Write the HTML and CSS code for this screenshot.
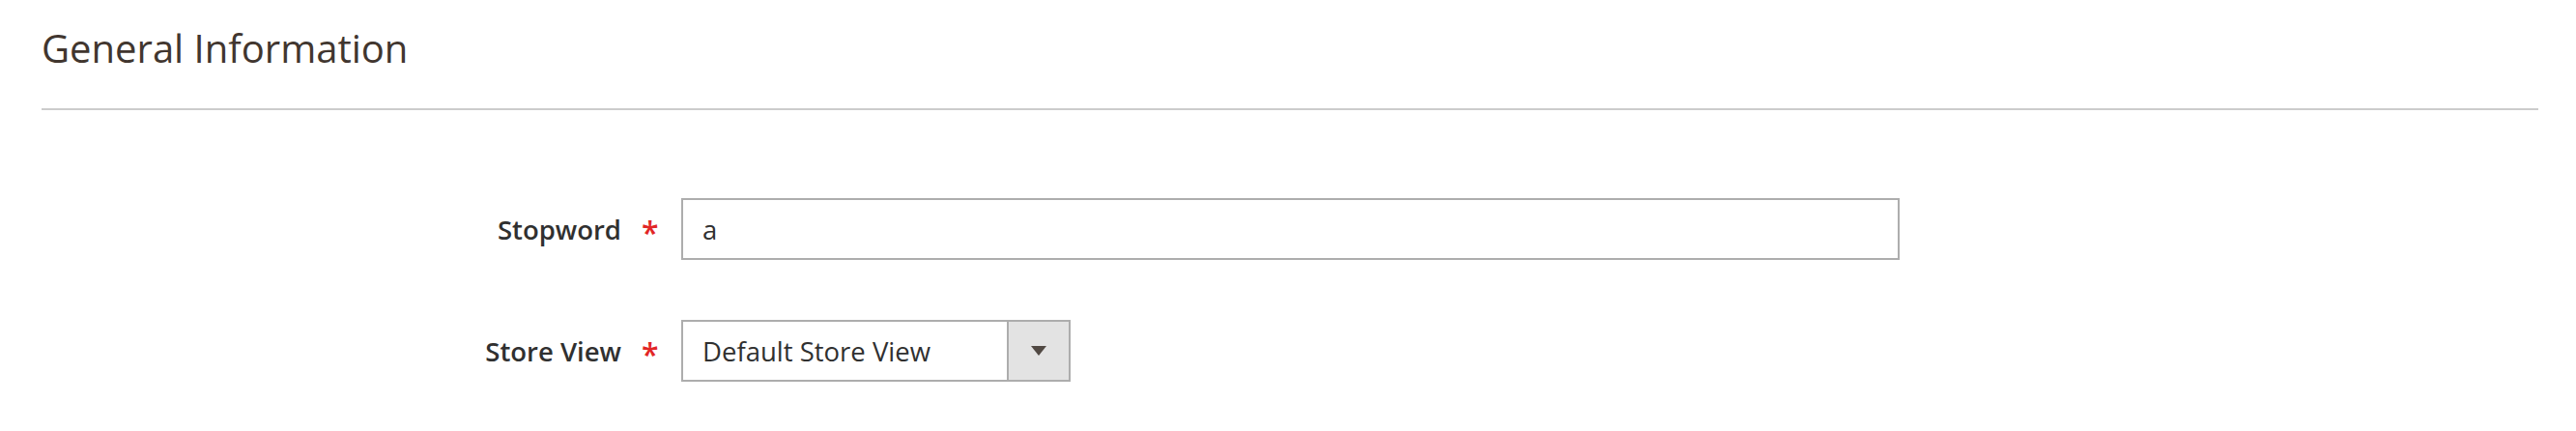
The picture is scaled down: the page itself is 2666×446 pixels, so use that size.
FILE: index.html
```html
<!doctype html>
<html>
<head>
  <link rel="stylesheet" href="styles.css">
</head>
<body>
  <div class="page">
    <div class="fieldset-title">
      <span class="title">General Information</span>
    </div>

    <div class="fieldset">
      <div class="field required">
        <label class="field-label" for="stopword"><span>Stopword</span></label>
        <div class="field-control">
          <input class="input-text" id="stopword" type="text" value="a">
        </div>
      </div>

      <div class="field required">
        <label class="field-label" for="store"><span>Store View</span></label>
        <div class="field-control">
          <div class="select-wrap">
            <select class="select" id="store">
              <option>Default Store View</option>
            </select>
            <span class="select-btn"><span class="arrow"></span></span>
          </div>
        </div>
      </div>
    </div>
  </div>
</body>
</html>
```

FILE: styles.css
```css
* {
  margin: 0;
  padding: 0;
  box-sizing: border-box;
}

body {
  background: #fff;
  font-family: 'Open Sans', 'Noto Sans', sans-serif;
  color: #303030;
}

.page {
  padding: 26px 39px 0 43px;
}

.fieldset-title {
  padding-bottom: 38px;
  border-bottom: 2px solid #ccc;
}

.fieldset-title .title {
  display: block;
  font-size: 40px;
  line-height: 48px;
  font-weight: 400;
  color: #41362f;
}

.fieldset {
  padding-top: 91px;
  display: flex;
  flex-direction: column;
  gap: 62px;
}

.field {
  display: flex;
  align-items: center;
}

.field-label {
  width: 662px;
  padding-right: 62px;
  text-align: right;
  font-size: 27.5px;
  font-weight: 600;
  color: #303030;
}

.field-label span {
  position: relative;
}

.required .field-label span:after {
  content: '*';
  position: absolute;
  left: 100%;
  top: 6px;
  margin-left: 21px;
  font-size: 32px;
  line-height: 1;
  font-weight: 600;
  color: #e22626;
}

.input-text,
.select {
  display: block;
  height: 64px;
  border: 2px solid #adadad;
  background: #fff;
  font-family: 'Open Sans', 'Noto Sans', sans-serif;
  font-size: 27.5px;
  color: #303030;
  padding: 0 20px;
  border-radius: 0;
  outline: none;
}

.input-text {
  width: 1261px;
}

.select-wrap {
  position: relative;
  width: 403px;
}

.select {
  width: 100%;
  appearance: none;
  -webkit-appearance: none;
}

.select-btn {
  position: absolute;
  top: 0;
  right: 0;
  width: 66px;
  height: 64px;
  background: #e3e3e3;
  border: 2px solid #adadad;
  display: flex;
  align-items: center;
  justify-content: center;
  pointer-events: none;
}

.arrow {
  width: 0;
  height: 0;
  border-left: 8px solid transparent;
  border-right: 8px solid transparent;
  border-top: 10px solid #514943;
}
```
